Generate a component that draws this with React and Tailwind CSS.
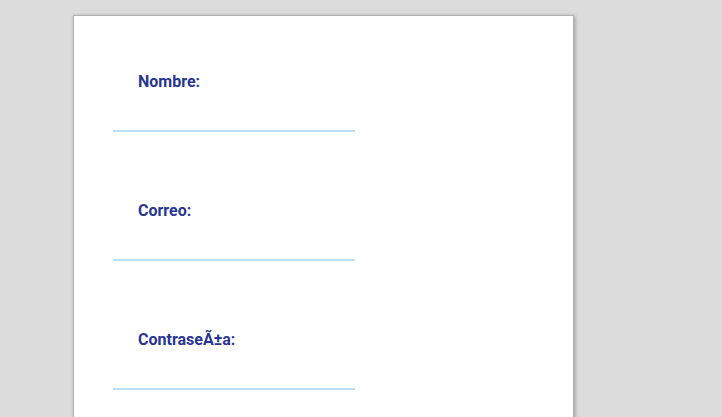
export default function App() {
  const fields = ['Nombre:', 'Correo:', 'ContraseÃ±a:']
  return (
    <div className="h-[417px] w-[722px] overflow-hidden bg-[#dcdcdc] pl-[73px] pt-[15px] font-['Roboto',sans-serif]">
      <div className="min-h-[420px] w-[501px] border border-[#b0b0b0] bg-white px-[39px] pt-[56px] shadow-[1px_1px_4px_rgba(0,0,0,0.3)]">
        <div className="flex flex-col gap-[69px]">
          {fields.map((f) => (
            <div key={f} className="flex flex-col">
              <label className="pl-[25px] text-[16px] font-bold leading-[19px] text-[#283593]">{f}</label>
              <div className="h-[41px] w-[242px] border-b-2 border-[#bbdefb]" />
            </div>
          ))}
        </div>
      </div>
    </div>
  )
}
